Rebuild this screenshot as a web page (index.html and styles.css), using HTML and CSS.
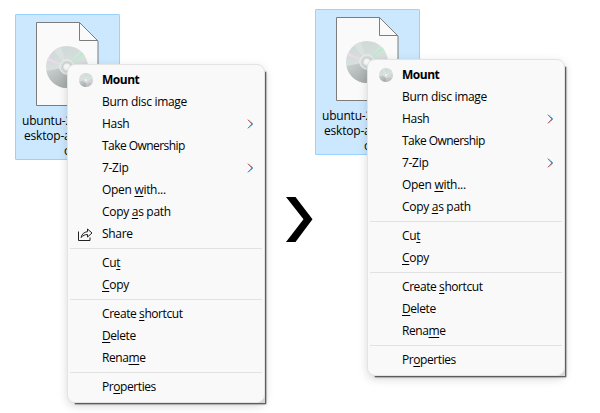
FILE: index.html
```html
<!DOCTYPE html>
<html lang="en">
<head>
<meta charset="utf-8">
<title>Context menus</title>
<link rel="stylesheet" href="styles.css">
</head>
<body>
<svg class="defs" width="0" height="0" aria-hidden="true">
  <defs>
    <linearGradient id="steel" x1="0.3" y1="0" x2="0.6" y2="1">
      <stop offset="0" stop-color="#ced9d6"/><stop offset="0.5" stop-color="#d9dfde"/><stop offset="1" stop-color="#b4b8b8"/>
    </linearGradient>
    <linearGradient id="shade" x1="0" y1="0" x2="0.6" y2="1">
      <stop offset="0" stop-color="#ccd4d3"/><stop offset="1" stop-color="#a9aeae"/>
    </linearGradient>
    <symbol id="disc" viewBox="0 0 42 42">
      <circle cx="21" cy="21" r="21" fill="url(#steel)"/>
      <path d="M21 21 8 4.500A21 21 0 0 1 15 1Z" fill="#dae2e0"/>
      <path d="M21 21 1.200 14.500A21 21 0 0 1 2.400 11.800Z" fill="#edd9ee"/>
      <path d="M21 21 34 4.500A21 21 0 0 1 39 10Z" fill="#d5e2dd"/>
      <path d="M21 21 36 6.300A21 21 0 0 1 37.500 8.200Z" fill="#b8ebc9"/>
      <path d="M21 21 0.500 25A21 21 0 0 0 21 42Z" fill="url(#shade)"/>
      <path d="M21 21 41 27A21 21 0 0 1 40 30Z" fill="#ead8e8"/>
      <circle cx="21" cy="21" r="7.200" fill="#d7dddc" stroke="#edf0f0"/>
      <circle cx="21" cy="21" r="4.500" fill="#e3e7e6" stroke="#c5cdcb"/>
      <circle cx="21" cy="21" r="2.800" fill="#fafafa"/>
    </symbol>
    <symbol id="arrow" viewBox="0 0 7 10">
      <path d="M1.900 0.700 6 5 1.900 9.300" fill="none" stroke="#7cc4ec" stroke-width="0.900"/>
      <path d="M0.700 0.700 4.900 5 0.700 9.300" fill="none" stroke="#b5574f" stroke-width="0.900"/>
      <path d="M3.600 3 5.500 5 3.600 7" fill="none" stroke="#38456f" stroke-width="0.500"/>
    </symbol>
  </defs>
</svg>
<main class="stage">
  <section class="scene before">
    <div class="file">
      <svg class="page" width="63" height="84" viewBox="0 0 63 84">
        <path d="M0.500 0.500H43.500L62 19V83.500H0.500Z" fill="#fafafa" stroke="#7c7c7c"/>
        <path d="M43.500 0.500V18.500H62" fill="none" stroke="#7c7c7c"/>
        <use href="#disc" x="10" y="24" width="42" height="42"/>
      </svg>
      <div class="label"><span class="l1">ubuntu-2</span><span class="l2">esktop-a</span><span class="l3">o</span></div>
    </div>
    <ul class="menu">
      <li class="bold"><svg class="icon" width="14" height="14"><use href="#disc"/></svg><span>Mount</span></li>
      <li><span>Burn disc image</span></li>
      <li><span>Hash</span><svg class="arrow"><use href="#arrow"/></svg></li>
      <li><span class="tight">Take Ownership</span></li>
      <li><span>7-Zip</span><svg class="arrow"><use href="#arrow"/></svg></li>
      <li><span>Open <u>w</u>ith...</span></li>
      <li><span>Copy <u>a</u>s path</span></li>
      <li><svg class="icon share" width="15" height="13" viewBox="0 0 15 13"><path d="M0.500 3.500V12.500H12V9.500M3 9.500C4 6 6 4 9.500 3.700V1L14 5 9.500 9V6.500C7 6.500 5 7.500 3 9.500Z" fill="none" stroke="#222"/></svg><span>Share</span></li>
      <li class="rule"></li>
      <li><span>Cu<u>t</u></span></li>
      <li><span><u>C</u>opy</span></li>
      <li class="rule"></li>
      <li><span class="snug">Create <u>s</u>hortcut</span></li>
      <li><span class="snug"><u>D</u>elete</span></li>
      <li><span class="snug">Rena<u>m</u>e</span></li>
      <li class="rule"></li>
      <li><span class="snug">Pr<u>o</u>perties</span></li>
    </ul>
  </section>
  <svg class="next" width="27" height="45" viewBox="0 0 27 45"><path d="M0 0H9.500L26.500 22.300 9.500 45H0L17.500 22.300Z"/></svg>
  <section class="scene after">
    <div class="file">
      <svg class="page" width="63" height="84" viewBox="0 0 63 84">
        <path d="M0.500 0.500H43.500L62 19V83.500H0.500Z" fill="#fafafa" stroke="#7c7c7c"/>
        <path d="M43.500 0.500V18.500H62" fill="none" stroke="#7c7c7c"/>
        <use href="#disc" x="10" y="24" width="42" height="42"/>
      </svg>
      <div class="label"><span class="l1">ubuntu-2</span><span class="l2">esktop-a</span><span class="l3">o</span></div>
    </div>
    <ul class="menu">
      <li class="bold"><svg class="icon" width="14" height="14"><use href="#disc"/></svg><span>Mount</span></li>
      <li><span>Burn disc image</span></li>
      <li><span>Hash</span><svg class="arrow"><use href="#arrow"/></svg></li>
      <li><span class="tight">Take Ownership</span></li>
      <li><span>7-Zip</span><svg class="arrow"><use href="#arrow"/></svg></li>
      <li><span>Open <u>w</u>ith...</span></li>
      <li><span>Copy <u>a</u>s path</span></li>
      <li class="rule"></li>
      <li><span>Cu<u>t</u></span></li>
      <li><span><u>C</u>opy</span></li>
      <li class="rule"></li>
      <li><span class="snug">Create <u>s</u>hortcut</span></li>
      <li><span class="snug"><u>D</u>elete</span></li>
      <li><span class="snug">Rena<u>m</u>e</span></li>
      <li class="rule"></li>
      <li><span class="snug">Pr<u>o</u>perties</span></li>
    </ul>
  </section>
</main>
</body>
</html>
```

FILE: styles.css
```css
* { box-sizing: border-box; }
body { margin: 0; background: #fff; overflow: hidden; }
.defs { position: absolute; }
.stage {
  width: 600px;
  height: 413px;
  display: flex;
  align-items: flex-start;
  font: 12px/22px "Open Sans", "Noto Sans", sans-serif;
  letter-spacing: -0.3px;
  color: #000;
}
.scene { position: relative; isolation: isolate; width: 251px; flex: none; margin-left: 15px; }
.before { margin-top: 14px; }
.after { margin-top: 9px; margin-left: 2px; }
.next { flex: none; margin: 197px 0 0 20px; }
.file {
  width: 105px;
  height: 146px;
  padding: 7px 0 0 20px;
  background: #cce8ff;
  border: 1px solid #99d1ff;
  border-radius: 1px;
}
.page { display: block; }
.label { margin: 7px 0 0 -20px; line-height: 15px; white-space: nowrap; letter-spacing: -0.2px; }
.label span { display: block; }
.l1 { padding-left: 6px; }
.l2 { padding-left: 8px; }
.l3 { padding-left: 48px; }
/* The menu opens over the selected file. */
.menu {
  position: absolute;
  left: 52px;
  top: 50px;
  width: 198px;
  margin: 0;
  padding: 4px 2px;
  list-style: none;
  background: #f9f9f9;
  border: 1px solid #e3e3e3;
  border-radius: 8px;
  box-shadow: 0 3px 10px rgba(0, 0, 0, 0.15);
}
/* Square-cornered hard shadow along the right and bottom edges. */
.menu::after {
  content: "";
  position: absolute;
  z-index: -1;
  inset: 6px -1px -1px 6px;
  background: #e6e6e6;
  box-shadow: 1px 1px 1px #666, 1px 1px 2px #888;
}
.menu li { display: flex; align-items: center; height: 22px; padding-left: 32px; }
.menu .rule { height: 7px; padding: 0; }
.rule::before { content: ""; flex: 1; height: 1px; background: #e2e2e2; }
.icon { flex: none; margin-left: -23px; margin-right: 9px; }
.share { margin-left: -24px; }
.bold { font-weight: 700; letter-spacing: -0.5px; }
.tight { letter-spacing: -0.55px; }
.snug { letter-spacing: -0.42px; }
.menu u { text-decoration: underline 1px; text-underline-offset: 2px; text-decoration-skip-ink: none; }
.arrow { width: 7px; height: 10px; margin-left: auto; margin-right: 8px; }
```
